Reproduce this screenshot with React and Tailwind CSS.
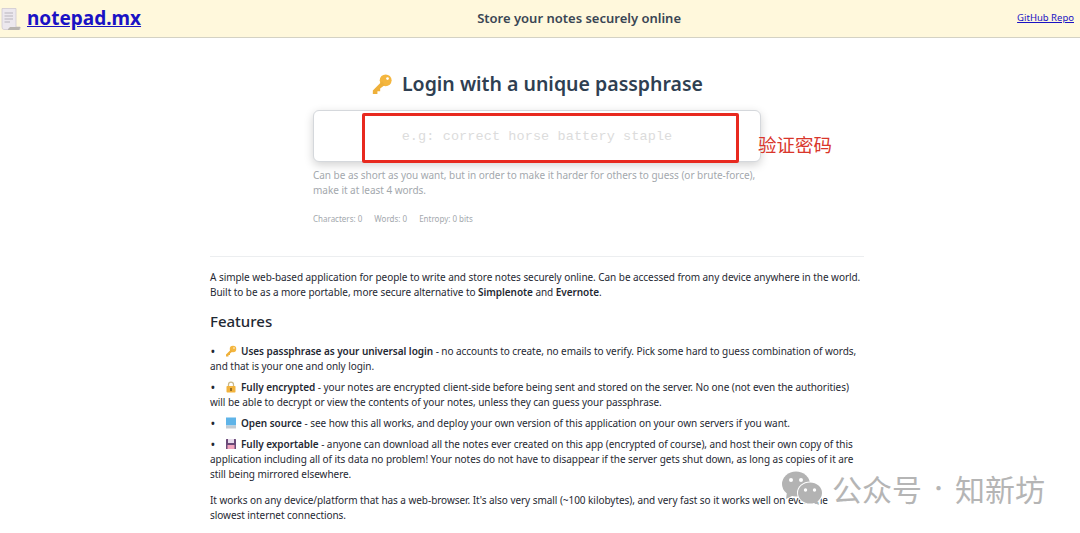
const KeyIcon = ({ className }) => (
  <svg viewBox="0 0 24 24" className={className}>
    <circle cx="16" cy="8" r="6.5" fill="#f4b63f" />
    <circle cx="18" cy="6" r="1.5" fill="#fff" />
    <path d="M12 9 L2 19 L2 23 L7 23 L7 20 L10 20 L10 17 L15 13Z" fill="#eeb03a" />
  </svg>
);

const LockIcon = ({ className }) => (
  <svg viewBox="0 0 24 24" className={className}>
    <path d="M7 11V7a5 5 0 0 1 10 0v4" fill="none" stroke="#c9b98a" strokeWidth="2.5" />
    <rect x="3" y="10" width="18" height="13" rx="1.5" fill="#f2b33d" />
    <rect x="10.5" y="14" width="3" height="6" fill="#7a5a1e" />
  </svg>
);

const BookIcon = ({ className }) => (
  <svg viewBox="0 0 24 24" className={className}>
    <rect x="2" y="1" width="20" height="16" fill="#5fb4e8" />
    <rect x="2" y="17" width="20" height="6" fill="#c3ccd3" />
  </svg>
);

const SaveIcon = ({ className }) => (
  <svg viewBox="0 0 24 24" className={className}>
    <rect x="2" y="2" width="20" height="20" rx="1" fill="#6b4a78" />
    <rect x="6" y="2" width="12" height="8" fill="#e8dcec" />
    <rect x="5" y="14" width="14" height="8" fill="#f3a6bf" />
  </svg>
);

const NoteIcon = () => (
  <svg viewBox="0 0 20 24" className="w-[20px] h-[24px]">
    <path d="M1 1.5 H15 V20 H19 V22.5 H3 Q1 22.5 1 20Z" fill="#ece8ee" stroke="#cfc9d2" strokeWidth="0.8" />
    <path d="M7 22 L9 20 H19.5 L18 23 H7Z" fill="#b9b5b0" />
    <path d="M3.5 6 H12 M3.5 9 H12 M3.5 12 H12 M3.5 15 H9" stroke="#b7b3bb" strokeWidth="1.1" />
  </svg>
);

const features = [
  {
    icon: KeyIcon,
    title: "Uses passphrase as your universal login",
    text: " - no accounts to create, no emails to verify. Pick some hard to guess combination of words, and that is your one and only login.",
  },
  {
    icon: LockIcon,
    title: "Fully encrypted",
    text: " - your notes are encrypted client-side before being sent and stored on the server. No one (not even the authorities) will be able to decrypt or view the contents of your notes, unless they can guess your passphrase.",
  },
  {
    icon: BookIcon,
    title: "Open source",
    text: " - see how this all works, and deploy your own version of this application on your own servers if you want.",
  },
  {
    icon: SaveIcon,
    title: "Fully exportable",
    text: " - anyone can download all the notes ever created on this app (encrypted of course), and host their own copy of this application including all of its data no problem! Your notes do not have to disappear if the server gets shut down, as long as copies of it are still being mirrored elsewhere.",
  },
];

export default function App() {
  return (
    <div className="relative h-[533px] overflow-hidden bg-white font-['Noto_Sans',sans-serif] text-[#1f2933]">
      {/* Header */}
      <header className="flex justify-between items-center h-[38px] bg-[#fff8dc] border-b border-[#d4d2c4] pl-[1px] pr-[6px]">
        <div className="flex items-center gap-[6px]">
          <NoteIcon />
          <a href="#" className="text-[19px] font-bold text-[#1a12c4] underline leading-none">
            notepad.mx
          </a>
        </div>
        <p className="text-[13px] font-semibold text-[#3a4654] whitespace-nowrap">
          Store your notes securely online
        </p>
        <a href="#" className="text-[9.5px] text-[#1a12c4] underline">
          GitHub Repo
        </a>
      </header>

      <main className="w-[654px] ml-[210px]">
        {/* Login */}
        <h1 className="flex items-center justify-center gap-[9px] mt-[32px] text-[19.5px] leading-[28px] font-semibold text-[#2f3f52]">
          <KeyIcon className="w-[22px] h-[22px]" />
          Login with a unique passphrase
        </h1>
        <div className="w-[448px] ml-[103px] mt-[12px]">
          <div className="h-[52px] pt-[2px] flex items-center justify-center bg-white border border-[#d5d8dc] rounded-md shadow-[0_3px_10px_rgba(0,0,0,0.18)]">
            <span className="font-['Liberation_Mono',monospace] text-[13.5px] text-[#dcdcdc] tracking-[0.1px]">
              e.g: correct horse battery staple
            </span>
          </div>
          <p className="mt-[6px] text-[10px] leading-[15px] tracking-[-0.03px] text-[#a3a8ad]">
            Can be as short as you want, but in order to make it harder for others to guess (or brute-force), make it at least 4 words.
          </p>
          <div className="flex gap-[12px] mt-[15px] text-[8px] leading-[12px] text-[#a3a8ad]">
            <span>Characters: 0</span>
            <span>Words: 0</span>
            <span>Entropy: 0 bits</span>
          </div>
        </div>

        <hr className="mt-[31px] border-[#eceef0]" />

        {/* About */}
        <p className="mt-[13px] text-[10px] leading-[15px] tracking-[-0.05px]">
          A simple web-based application for people to write and store notes securely online. Can be accessed from any device anywhere in the world. Built to be as a more portable, more secure alternative to <b className="font-semibold">Simplenote</b> and <b className="font-semibold">Evernote</b>.
        </p>
        <h2 className="mt-[10px] text-[15px] leading-[22px] font-medium">Features</h2>
        <ul className="mt-[12px] flex flex-col gap-[6px]">
          {features.map((f) => (
            <li key={f.title} className="text-[10px] leading-[15px] tracking-[-0.05px]">
              <span className="inline-block w-[15px] pl-[1px] font-bold">•</span>
              <f.icon className="inline-block w-[12px] h-[12px] mr-[4px] align-[-2px]" />
              <b className="font-semibold">{f.title}</b>
              {f.text}
            </li>
          ))}
        </ul>
        <p className="mt-[11px] text-[10px] leading-[15px] tracking-[-0.05px]">
          It works on any device/platform that has a web-browser. It's also very small (~100 kilobytes), and very fast so it works well on even the slowest internet connections.
        </p>
      </main>

      {/* Annotation */}
      <div className="absolute left-[362px] top-[113px] w-[377px] h-[50px] border-[3px] border-[#e8291f] rounded-[2px]" />
      <span className="absolute left-[758px] top-[131px] font-['Noto_Sans_CJK_SC',sans-serif] text-[18.5px] leading-[26px] text-[#d9362b]">
        验证密码
      </span>

      {/* Watermark */}
      <div className="absolute left-[781px] top-[470px] flex items-center font-['Noto_Sans_CJK_SC',sans-serif] text-[30px] leading-[36px] text-[#b5b5b5] whitespace-nowrap">
        <svg viewBox="0 0 42 36" className="w-[42px] h-[36px] mr-[9px]">
          <ellipse cx="15" cy="14" rx="14" ry="12.5" fill="#b3b3b3" />
          <path d="M6 22 L5 29 L13 25Z" fill="#b3b3b3" />
          <circle cx="10" cy="10" r="2" fill="#fff" />
          <circle cx="20" cy="10" r="2" fill="#fff" />
          <ellipse cx="29" cy="23" rx="13" ry="11.5" fill="#fff" />
          <ellipse cx="29" cy="23" rx="12" ry="10.5" fill="#b3b3b3" />
          <path d="M36 30 L38 35 L31 32Z" fill="#b3b3b3" />
          <circle cx="24.5" cy="20" r="1.7" fill="#fff" />
          <circle cx="33.5" cy="20" r="1.7" fill="#fff" />
        </svg>
        <span>公众号</span>
        <span className="w-[33px] text-center text-[20px]">·</span>
        <span>知新坊</span>
      </div>
    </div>
  );
}
